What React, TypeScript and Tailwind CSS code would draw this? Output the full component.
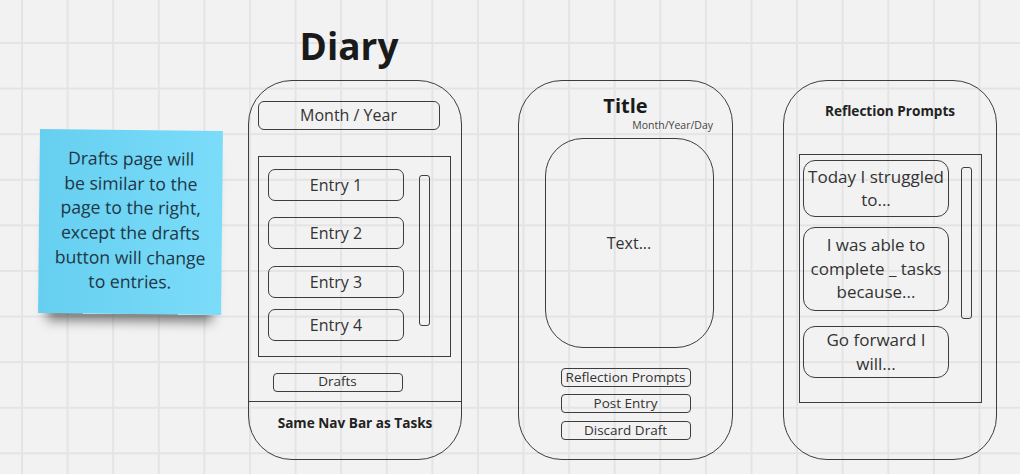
const line = "border-[1.5px] border-[#3d3d3d]";

function Entry({ label, mt }: { label: string; mt: string }) {
  return (
    <div className={`${mt} flex h-[32px] w-[136px] items-center justify-center rounded-[7px] ${line} text-[16px] text-[#333]`}>
      {label}
    </div>
  );
}

function SmallBtn({ label, mt }: { label: string; mt: string }) {
  return (
    <div className={`${mt} flex h-[19px] w-[130px] items-center justify-center rounded-[4px] ${line} text-[13.5px] leading-none text-[#333]`}>
      {label}
    </div>
  );
}

function Prompt({ lines, h, mt }: { lines: string[]; h: string; mt: string }) {
  return (
    <div className={`${mt} ${h} flex w-[146px] flex-col items-center justify-center rounded-[12px] ${line} text-[17px] leading-[23.5px] text-[#333]`}>
      {lines.map((l) => (
        <span key={l}>{l}</span>
      ))}
    </div>
  );
}

export default function App() {
  return (
    <div
      className="relative h-[474px] w-[1020px] overflow-hidden bg-[#f2f2f2] bg-[linear-gradient(to_right,#e4e4e4_2px,transparent_2px),linear-gradient(to_bottom,#e4e4e4_2px,transparent_2px)] bg-[size:45.6px_45.6px] bg-[position:21px_42px] text-[#333]"
      style={{ fontFamily: '"Open Sans", "Noto Sans", sans-serif' }}
    >
      {/* sticky note */}
      <div className="absolute left-[39px] top-[130px] flex h-[184px] w-[183px] rotate-[0.6deg] flex-col items-center justify-center bg-[linear-gradient(to_right,#66cff0,#7bdcf9)] pb-[4px] text-center text-[17.6px] leading-[24.7px] text-[#1e3645] shadow-[0_16px_12px_-9px_rgba(0,0,0,0.5)]">
        <span>Drafts page will</span>
        <span>be similar to the</span>
        <span className="whitespace-nowrap">page to the right,</span>
        <span className="whitespace-nowrap">except the drafts</span>
        <span className="whitespace-nowrap">button will change</span>
        <span>to entries.</span>
      </div>

      {/* heading */}
      <div className="absolute left-[290px] top-[20px] w-[118px] text-center text-[37px] font-bold leading-[52px] text-[#1a1a1a]">
        Diary
      </div>

      {/* phone 1: diary list */}
      <div className={`absolute left-[248px] top-[80px] flex h-[380px] w-[214px] flex-col rounded-[44px] ${line}`}>
        <div className="flex flex-col items-start pl-[8.5px] pt-[19.5px]">
          <div className={`flex h-[29px] w-[182px] items-center justify-center rounded-[6px] ${line} text-[16px] text-[#333]`}>
            Month / Year
          </div>
          <div className={`mt-[26px] flex h-[201px] w-[193px] ${line}`}>
            <div className="flex flex-col pl-[9.5px] pt-[12.5px]">
              <Entry label="Entry 1" mt="" />
              <Entry label="Entry 2" mt="mt-[16px]" />
              <Entry label="Entry 3" mt="mt-[17px]" />
              <Entry label="Entry 4" mt="mt-[11px]" />
            </div>
            <div className={`ml-[15px] mt-[18.5px] h-[151px] w-[11px] rounded-[3px] ${line}`} />
          </div>
          <div className={`ml-[15px] mt-[16px] flex h-[19px] w-[130px] items-center justify-center rounded-[4px] ${line} text-[13.5px] leading-none text-[#333]`}>
            Drafts
          </div>
        </div>
        <div className="mt-[9px] border-t-[1.5px] border-[#3d3d3d] pt-[11px] text-center text-[13.6px] font-bold text-[#222]">
          Same Nav Bar as Tasks
        </div>
      </div>

      {/* phone 2: entry editor */}
      <div className={`absolute left-[518px] top-[80px] flex h-[380px] w-[215px] flex-col items-center rounded-[44px] ${line}`}>
        <div className="mt-[11px] text-[20px] font-bold leading-[28px] text-[#1a1a1a]">Title</div>
        <div className="-mt-[2px] self-end pr-[19px] text-[10.5px] leading-[14px] text-[#444]">
          Month/Year/Day
        </div>
        <div className={`ml-[7px] mt-[6px] flex h-[210px] w-[169px] items-center justify-center rounded-[38px] ${line} text-[16px] text-[#333]`}>
          Text...
        </div>
        <SmallBtn label="Reflection Prompts" mt="mt-[20px]" />
        <SmallBtn label="Post Entry" mt="mt-[7px]" />
        <SmallBtn label="Discard Draft" mt="mt-[8px]" />
      </div>

      {/* phone 3: prompts */}
      <div className={`absolute left-[783px] top-[80px] flex h-[380px] w-[214px] flex-col items-center rounded-[44px] ${line}`}>
        <div className="mt-[19px] text-[13.6px] font-bold leading-[22px] text-[#222]">Reflection Prompts</div>
        <div className={`mt-[32px] flex h-[249px] w-[183px] ${line}`}>
          <div className="flex flex-col pl-[3.5px] pt-[4.5px]">
            <Prompt lines={["Today I struggled", "to..."]} h="h-[57px]" mt="" />
            <Prompt lines={["I was able to", "complete _ tasks", "because..."]} h="h-[84px]" mt="mt-[10px]" />
            <Prompt lines={["Go forward I", "will..."]} h="h-[52px]" mt="mt-[15px]" />
          </div>
          <div className={`ml-[12px] mt-[11.5px] h-[152px] w-[11px] rounded-[3px] ${line}`} />
        </div>
      </div>
    </div>
  );
}
